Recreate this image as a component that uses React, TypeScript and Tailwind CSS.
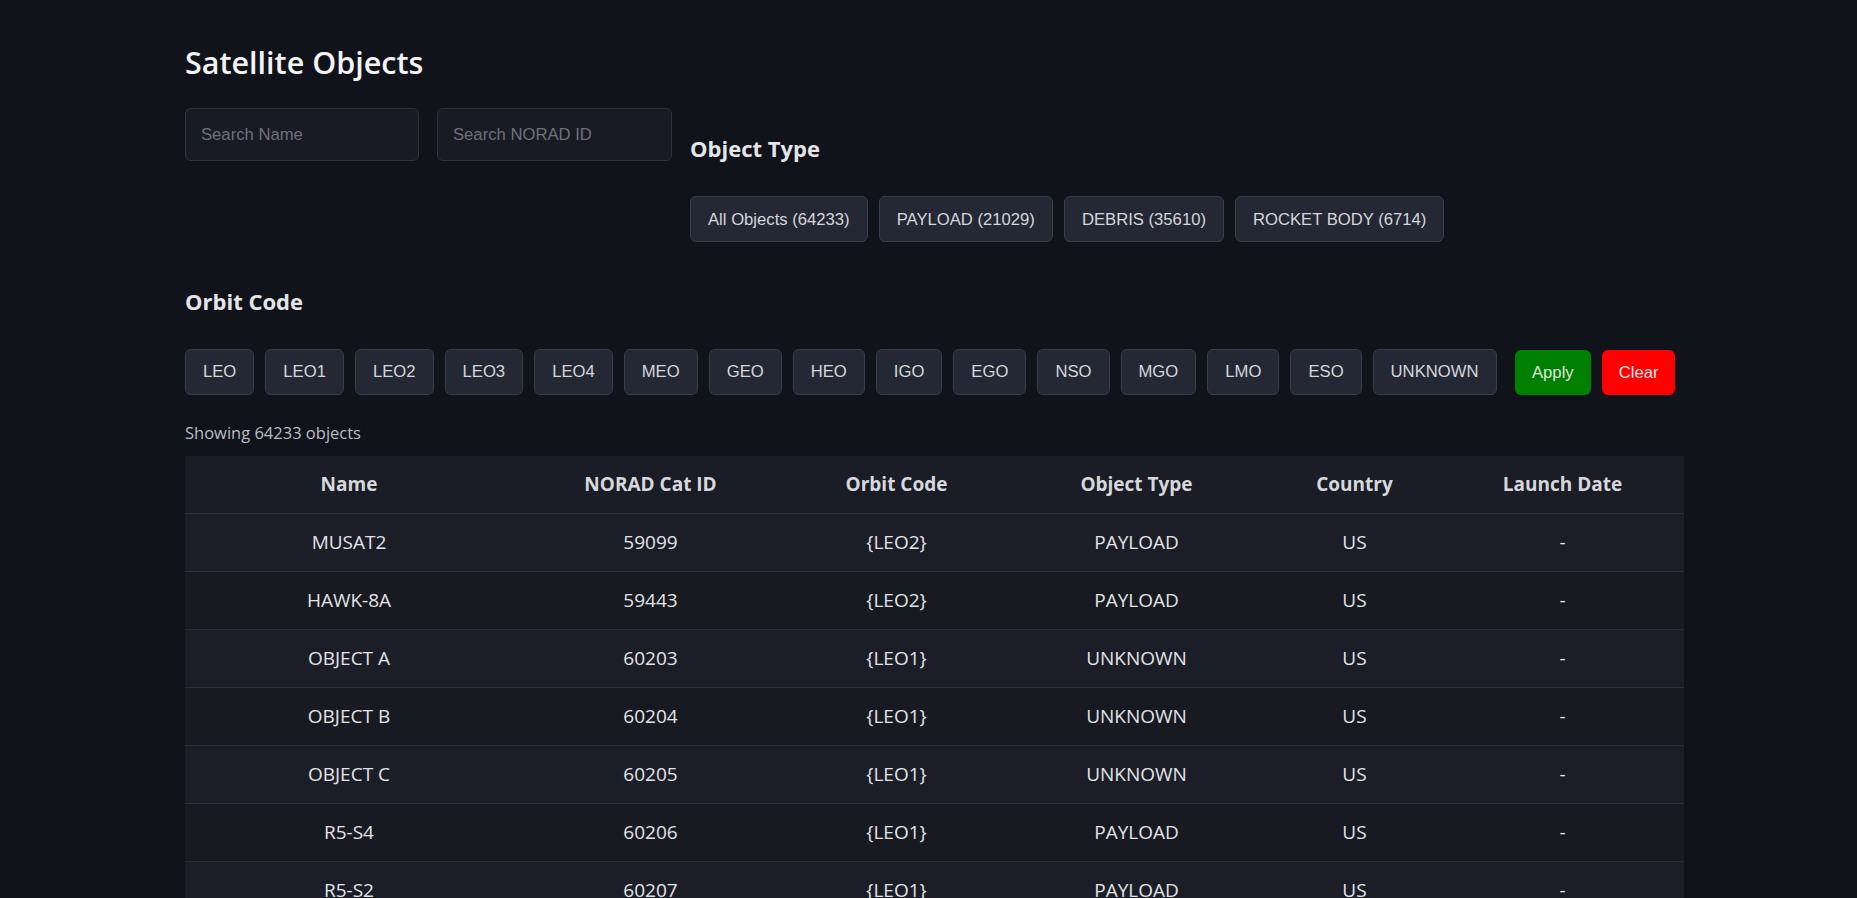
import React from "react";

const objectTypes = ["All Objects (64233)", "PAYLOAD (21029)", "DEBRIS (35610)", "ROCKET BODY (6714)"];

const orbitCodes = ["LEO", "LEO1", "LEO2", "LEO3", "LEO4", "MEO", "GEO", "HEO", "IGO", "EGO", "NSO", "MGO", "LMO", "ESO", "UNKNOWN"];

const columns = ["Name", "NORAD Cat ID", "Orbit Code", "Object Type", "Country", "Launch Date"];

const rows = [
  ["MUSAT2", "59099", "{LEO2}", "PAYLOAD", "US", "-"],
  ["HAWK-8A", "59443", "{LEO2}", "PAYLOAD", "US", "-"],
  ["OBJECT A", "60203", "{LEO1}", "UNKNOWN", "US", "-"],
  ["OBJECT B", "60204", "{LEO1}", "UNKNOWN", "US", "-"],
  ["OBJECT C", "60205", "{LEO1}", "UNKNOWN", "US", "-"],
  ["R5-S4", "60206", "{LEO1}", "PAYLOAD", "US", "-"],
  ["R5-S2", "60207", "{LEO1}", "PAYLOAD", "US", "-"],
  ["R5-S3", "60208", "{LEO1}", "PAYLOAD", "US", "-"],
];

// gray filter chip, same look for object type and orbit code
function Chip({ label }: { label: string }) {
  return (
    <button className="h-[46px] px-[17px] rounded-[6px] border border-[#393e4a] bg-[#232834] text-[#d4d6da] text-[16.67px] font-['Liberation_Sans',Arial,sans-serif] whitespace-nowrap">
      {label}
    </button>
  );
}

export default function App() {
  return (
    <div className="min-h-screen w-full bg-[#10131a] font-['Open_Sans',sans-serif]">
      <div className="ml-[185px] w-[1499px] pt-[43px]">
        <h1 className="text-[30.5px] leading-[38px] font-semibold text-[#f4f4f5]">Satellite Objects</h1>

        {/* search + object type */}
        <div className="mt-[27px] flex items-start gap-[18px]">
          <input
            placeholder="Search Name"
            className="h-[53px] w-[234px] rounded-[6px] border border-[#30333c] bg-[#191b24] px-[15px] text-[16.67px] text-[#d4d6da] placeholder:text-[#6e7179] font-['Liberation_Sans',Arial,sans-serif] outline-none"
          />
          <input
            placeholder="Search NORAD ID"
            className="h-[53px] w-[235px] rounded-[6px] border border-[#30333c] bg-[#191b24] px-[15px] text-[16.67px] text-[#d4d6da] placeholder:text-[#6e7179] font-['Liberation_Sans',Arial,sans-serif] outline-none"
          />
          <div className="pt-[25.5px]">
            <h2 className="text-[22px] leading-[28px] font-bold text-[#e4e5e7]">Object Type</h2>
            <div className="mt-[34.5px] flex gap-[11px]">
              {objectTypes.map((t) => (
                <Chip key={t} label={t} />
              ))}
            </div>
          </div>
        </div>

        {/* orbit code */}
        <h2 className="mt-[44.5px] text-[22px] leading-[28px] font-bold text-[#e4e5e7]">Orbit Code</h2>
        <div className="mt-[34px] flex items-end gap-[11px]">
          {orbitCodes.map((c) => (
            <Chip key={c} label={c} />
          ))}
          <button className="ml-[7.5px] h-[44.5px] px-[17px] rounded-[6px] bg-[#008000] text-[#dfe6df] text-[16.67px] font-['Liberation_Sans',Arial,sans-serif]">
            Apply
          </button>
          <button className="h-[44.5px] px-[17px] rounded-[6px] bg-[#ff0000] text-[#f3e6e6] text-[16.67px] font-['Liberation_Sans',Arial,sans-serif]">
            Clear
          </button>
        </div>

        <p className="mt-[27px] text-[16.5px] leading-[22px] text-[#b9bcc3]">Showing 64233 objects</p>

        <table className="mt-[12px] w-[1499px] table-fixed border-collapse text-[19px]">
          <colgroup>
            <col className="w-[328px]" />
            <col className="w-[275px]" />
            <col className="w-[217px]" />
            <col className="w-[263px]" />
            <col className="w-[173px]" />
            <col className="w-[243px]" />
          </colgroup>
          <thead>
            <tr className="h-[58px] bg-[#1a1d26] border-b border-[#2b2e39]">
              {columns.map((c) => (
                <th key={c} className="text-center font-bold text-[#d7d8dc]">
                  {c}
                </th>
              ))}
            </tr>
          </thead>
          <tbody>
            {rows.map((r, i) => (
              <tr key={i} className={`h-[58px] border-b border-[#2b2e39] ${i % 2 === 0 ? "bg-[#1b1e27]" : "bg-[#171a21]"}`}>
                {r.map((cell, j) => (
                  <td key={j} className="text-center text-[#e2e3e6]">
                    {cell}
                  </td>
                ))}
              </tr>
            ))}
          </tbody>
        </table>
      </div>
    </div>
  );
}
